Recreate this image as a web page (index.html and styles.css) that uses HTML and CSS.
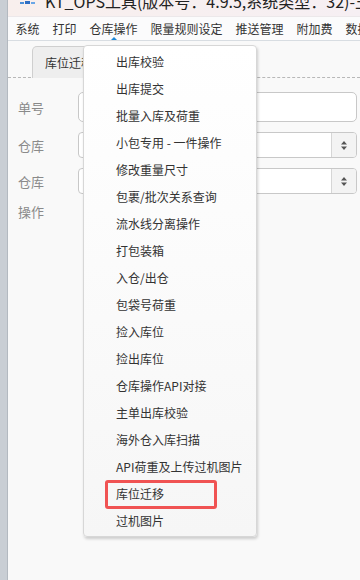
FILE: index.html
```html
<!DOCTYPE html>
<html>
<head>
<meta charset="utf-8">
<link rel="stylesheet" href="styles.css">
</head>
<body>
<div class="app">
  <div class="strip"></div>
  <div class="main">
    <div class="titlebar">
      <svg class="logo" width="16" height="6" viewBox="0 0 16 6"><rect x="0" y="2" width="4" height="2" fill="#4a8fd8"/><rect x="5" y="1" width="5" height="3" fill="#2f6fc4"/><rect x="11" y="2" width="4" height="2" fill="#6aa6e6"/></svg>
      <span class="title">KT_OPS工具(版本号：4.9.5,系统类型：32)-王家湾</span>
    </div>
    <div class="menubar">
      <span class="mi">系统</span>
      <span class="mi">打印</span>
      <span class="mi active">仓库操作</span>
      <span class="mi">限量规则设定</span>
      <span class="mi">推送管理</span>
      <span class="mi">附加费</span>
      <span class="mi">数据</span>
    </div>
    <div class="content">
      <div class="tabs">
        <div class="tab">库位迁移 <span class="close">x</span></div>
      </div>
      <div class="form">
        <div class="row r1"><label>单号</label><div class="input"></div></div>
        <div class="row r2"><label>仓库</label><div class="select"><span class="ph">—请选择—</span><span class="arrow"><svg width="6" height="9" viewBox="0 0 6 9"><path d="M3 0 L6 3.5 H0Z M3 9 L6 5.5 H0Z" fill="#555"/></svg></span></div></div>
        <div class="row r3"><label>仓库</label><div class="select"><span class="ph">—请选择—</span><span class="arrow"><svg width="6" height="9" viewBox="0 0 6 9"><path d="M3 0 L6 3.5 H0Z M3 9 L6 5.5 H0Z" fill="#555"/></svg></span></div></div>
        <div class="row r4"><label>操作</label></div>
      </div>
    </div>
  </div>
  <ul class="dropdown">
    <li>出库校验</li>
    <li>出库提交</li>
    <li>批量入库及荷重</li>
    <li>小包专用 - 一件操作</li>
    <li>修改重量尺寸</li>
    <li>包裹/批次关系查询</li>
    <li>流水线分离操作</li>
    <li>打包装箱</li>
    <li>入仓/出仓</li>
    <li>包袋号荷重</li>
    <li>捡入库位</li>
    <li>捡出库位</li>
    <li>仓库操作API对接</li>
    <li>主单出库校验</li>
    <li>海外仓入库扫描</li>
    <li>API荷重及上传过机图片</li>
    <li class="marked">库位迁移<span class="hl"></span></li>
    <li>过机图片</li>
  </ul>
</div>
</body>
</html>
```
FILE: styles.css
```css
* { box-sizing: border-box; }
html, body { margin: 0; padding: 0; }
body {
  width: 360px;
  height: 580px;
  overflow: hidden;
  background: #f9f9f9;
  font-family: "Noto Sans CJK SC", "Noto Sans", sans-serif;
  font-size: 12px;
  color: #333;
}
.app {
  position: relative;
  display: flex;
  height: 580px;
}
.strip {
  width: 8px;
  flex: none;
  background: #c9ced4;
  border-right: 1px solid #b3b9c0;
}
.main {
  flex: 1;
  min-width: 0;
  display: flex;
  flex-direction: column;
}
.titlebar {
  height: 17px;
  background: linear-gradient(90deg, #f8efed, #f6eff3);
  display: flex;
  align-items: flex-end;
  overflow: hidden;
  white-space: nowrap;
  border-bottom: 1px solid #ece8ea;
}
.logo { margin-left: 12px; margin-bottom: 10px; flex: none; }
.title {
  margin-left: 9px;
  font-size: 16px;
  line-height: 16px;
  margin-bottom: 7px;
  color: #222;
  font-family: "Noto Sans CJK SC", sans-serif;
}
.menubar {
  height: 24px;
  display: flex;
  align-items: center;
  padding-left: 1px;
  background: #fbfbfc;
  border-bottom: 1px solid #d8dde2;
  white-space: nowrap;
  overflow: hidden;
}
.mi {
  padding: 0 6.5px;
  line-height: 22px;
  position: relative;
  color: #333;
  flex: none;
}
.mi.active::after {
  content: "";
  position: absolute;
  left: 0;
  right: 0;
  bottom: -2px;
  height: 2px;
  background: #1e88d8;
}
.mi.active::before {
  content: "";
  position: absolute;
  left: 50%;
  margin-left: -3px;
  bottom: 0;
  border: 3px solid transparent;
  border-bottom-color: #1e88d8;
  border-top: 0;
}
.content {
  flex: 1;
  display: flex;
  flex-direction: column;
}
.tabs {
  margin-top: 5px;
  height: 32px;
  padding-left: 24px;
  border-bottom: 1px dashed #b8b8b8;
  display: flex;
  align-items: flex-end;
}
.tab {
  height: 32px;
  margin-bottom: -1px;
  padding: 0 12px 0 12px;
  display: flex;
  align-items: center;
  background: #eeeeee;
  border: 1px solid #cfcfcf;
  border-bottom: none;
  border-radius: 5px 5px 0 0;
  font-size: 12px;
  color: #333;
  width: 120px;
}
.close { color: #bbb; margin-left: 4px; font-size: 11px; font-family: "DejaVu Serif", serif; }
.form {
  padding: 14px 3px 0 10px;
  display: flex;
  flex-direction: column;
}
.row {
  display: flex;
  align-items: center;
}
.row label {
  width: 60px;
  flex: none;
  color: #8a8a8a;
  font-size: 13px;
}
.r1 { height: 30px; }
.r2 { height: 26px; margin-top: 10px; }
.r3 { height: 26px; margin-top: 10px; }
.r4 { height: 20px; margin-top: 7px; }
.input {
  flex: 1;
  height: 30px;
  border: 1px solid #c8c8c8;
  border-radius: 5px;
  background: #fff;
}
.select {
  flex: 1;
  height: 26px;
  border: 1px solid #c8c8c8;
  border-radius: 4px;
  background: #fff;
  display: flex;
  align-items: center;
  overflow: hidden;
}
.ph { flex: 1; padding-left: 7px; color: #ccc; font-size: 12px; }
.arrow {
  width: 25px;
  height: 100%;
  border-left: 1px solid #d6d6d6;
  background: #f3f3f3;
  display: flex;
  align-items: center;
  justify-content: center;
}
.dropdown {
  position: absolute;
  left: 83px;
  top: 45px;
  width: 174px;
  height: 492px;
  margin: 0;
  padding: 2px 0 0 0;
  list-style: none;
  background: linear-gradient(#ffffff, #f6f6f6);
  border: 1px solid #d7d7d7;
  border-radius: 4px;
  box-shadow: 1px 2px 3px rgba(0,0,0,0.18);
}
.dropdown li {
  position: relative;
  height: 27px;
  line-height: 27px;
  padding-left: 32px;
  color: #333;
  white-space: nowrap;
}
.hl {
  position: absolute;
  left: 21px;
  top: 0;
  width: 112px;
  height: 29px;
  border: 3px solid #f05353;
  border-radius: 3px;
}
```
